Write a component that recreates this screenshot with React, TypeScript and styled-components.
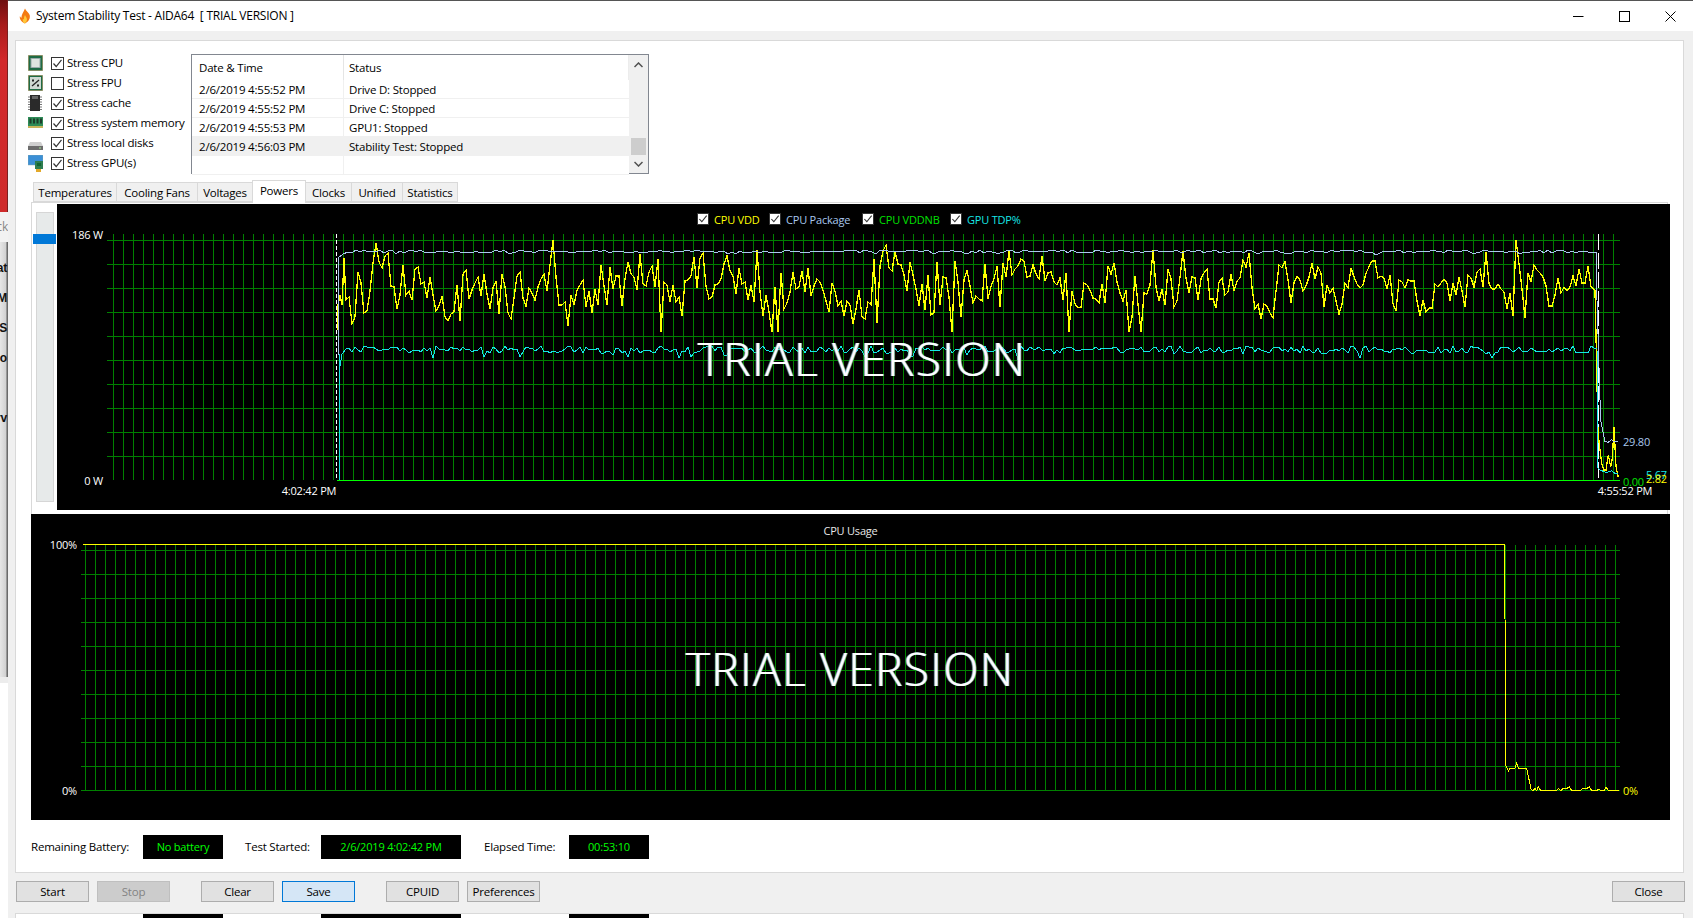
import React, { useMemo } from "react";
import styled, { createGlobalStyle } from "styled-components";

const UI = `"Open Sans", "Noto Sans", "Liberation Sans", sans-serif`;

const Global = createGlobalStyle`
  html, body { margin: 0; padding: 0; background: #fff; }
  #root { width: 1701px; height: 918px; overflow: hidden; }
  * { box-sizing: border-box; }
`;

const Page = styled.div`
  display: flex; width: 1701px; height: 918px; overflow: hidden; background: #fff;
  font: 11.5px/1 ${UI}; color: #000; letter-spacing: -0.2px;
`;
const LeftStrip = styled.div`display: flex; flex-direction: column; width: 8px; flex: none;`;
const RedBlock = styled.div`
  height: 212px;
  background: linear-gradient(to bottom, #6e0f10 0, #a81c1c 25px, #d2282a 60px, #cf2a2a 212px);
  border-right: 1px solid #7a2020;
`;
const FragBlock = styled.div`
  height: 465px; display: flex; flex-direction: column; overflow: hidden;
  background: linear-gradient(to right, #e6e6e6, #d2d2d2 70%, #6a6a6a 90%, #6a6a6a);
`;
const FragHead = styled.div`
  height: 30px; background: #f2f2f2; color: #888; text-align: right; line-height: 30px; overflow: hidden;
  direction: rtl; white-space: nowrap; font-size: 12px;
`;
const Frag = styled.div<{ $mt: number }>`
  margin-top: ${p => p.$mt}px; height: 14px; line-height: 14px; font: bold 12px/14px "Liberation Sans", sans-serif;
  direction: rtl; white-space: nowrap; overflow: hidden; color: #111; padding-right: 1px;
`;
const FragFoot = styled.div`height: 6px; background: #ececec;`;

const Window = styled.div`
  width: 1685px; flex: none; height: 918px; display: flex; flex-direction: column;
  background: #f0f0f0; border-top: 1px solid #555;
`;
const TitleBar = styled.div`
  height: 30px; flex: none; background: #fff; display: flex; align-items: center; padding-left: 10px;
  font-size: 12px;
`;
const TitleText = styled.span`margin-left: 4px; white-space: pre; letter-spacing: -0.24px;`;
const WinControls = styled.div`margin-left: auto; display: flex; align-items: center; height: 100%;`;
const WinBtn = styled.div`width: 46px; height: 30px; display: flex; align-items: center; justify-content: center;`;

const Panel = styled.div`
  margin: 9px 0 0 7px; width: 1669px; height: 833px; flex: none; background: #fff;
  border: 1px solid #d9d9d9; display: flex; flex-direction: column;
`;
const TopRow = styled.div`display: flex; padding: 12px 0 0 12px; height: 133px; flex: none;`;
const Checks = styled.div`width: 163px; flex: none; display: flex; flex-direction: column;`;
const CheckRow = styled.div`height: 20px; display: flex; align-items: center; white-space: nowrap;`;
const IconSlot = styled.div`width: 15px; height: 16px; flex: none; margin-right: 8px;`;
const Box = styled.span<{ $size: number }>`
  width: ${p => p.$size}px; height: ${p => p.$size}px; flex: none; background: #fff; border: 1px solid #333;
  display: inline-flex; align-items: center; justify-content: center;
`;
const CheckLabel = styled.span`margin-left: 3px;`;

const List = styled.div`
  margin-top: 1px; width: 458px; height: 120px; flex: none; border: 1px solid #828790; display: flex; background: #fff;
`;
const ListMain = styled.div`flex: 1; display: flex; flex-direction: column;`;
const Header = styled.div`
  height: 25px; flex: none; display: grid; grid-template-columns: 151px 1fr; align-items: stretch;
  border-right: 1px solid #ececec;
`;
const HeadCell = styled.div`
  display: flex; align-items: center; padding-left: 7px;
  & + & { border-left: 1px solid #e5e5e5; padding-left: 5px; }
`;
const Row = styled.div<{ $sel?: boolean }>`
  height: 19px; flex: none; display: grid; grid-template-columns: 151px 1fr; align-items: stretch;
  background: ${p => (p.$sel ? "#f0f0f0" : "#fff")};
  border-bottom: 1px solid #f0f0f0;
`;
const Cell = styled.div`
  display: flex; align-items: center; padding: 2px 0 0 7px;
  & + & { border-left: 1px solid #f0f0f0; padding-left: 5px; }
`;
const Scroll = styled.div`width: 19px; flex: none; background: #f0f0f0; display: flex; flex-direction: column;`;
const ScrollBtn = styled.div<{ $h: number }>`height: ${p => p.$h}px; flex: none; display: flex; align-items: center; justify-content: center;`;
const Track = styled.div`flex: 1; display: flex; flex-direction: column; justify-content: flex-end; align-items: center;`;
const Thumb = styled.div`width: 15px; height: 17px; background: #cdcdcd;`;

const Tabs = styled.div`
  display: flex; align-items: flex-end; height: 23px; flex: none; margin: 6px 0 0 18px; position: relative; z-index: 1;
`;
const Tab = styled.div<{ $w: number; $on?: boolean }>`
  width: ${p => p.$w}px; height: ${p => (p.$on ? 23 : 20)}px; margin-bottom: ${p => (p.$on ? 0 : 1)}px;
  display: flex; align-items: center; justify-content: center; white-space: nowrap;
  background: ${p => (p.$on ? "#fff" : "#f0f0f0")};
  border: 1px solid #d9d9d9; border-bottom: ${p => (p.$on ? "none" : "1px solid #d9d9d9")};
  margin-left: -1px;
  padding-bottom: ${p => (p.$on ? 3 : 0)}px;
  padding-top: ${p => (p.$on ? 0 : 2)}px;
`;
const TabBody = styled.div`
  margin: -1px 0 0 15px; width: 1637px; height: 312px; flex: none;
  border: 1px solid #d9d9d9; border-bottom: none; display: flex; padding-top: 1px;
`;
const SliderCol = styled.div`width: 25px; flex: none; padding: 8px 3px 8px 4px; position: relative;`;
const Trough = styled.div`width: 18px; height: 290px; background: #e7eaea; border: 1px solid #d6d6d6;`;
const SliderThumb = styled.div`position: absolute; left: 1px; top: 30px; width: 23px; height: 10px; background: #0078d7;`;
const ChartA = styled.div`position: relative; width: 1613px; height: 306px; flex: none; background: #000;`;
const ChartB = styled.div`position: relative; margin-left: 15px; width: 1639px; height: 306px; flex: none; background: #000;`;
const ChartSvg = styled.svg`display: block; width: 100%; height: 100%;`;
const ChartText = styled.text`font: 11px ${UI};`;
const Legend = styled.div`
  position: absolute; left: 640px; top: 9px; display: flex; align-items: center; height: 12px; font-size: 11px;
`;
const LegendItem = styled.div<{ $w: number; $c: string }>`
  width: ${p => p.$w}px; display: flex; align-items: center; gap: 5px; color: ${p => p.$c}; white-space: nowrap;
`;
const ChartTitle = styled.div`
  position: absolute; top: 11px; left: 0; right: 0; text-align: center; color: #e8e8e8; font-size: 11px;
`;
const Watermark = styled.div<{ $x: number; $y: number }>`
  position: absolute; left: ${p => p.$x}px; top: ${p => p.$y}px; transform: translate(-50%, -50%);
  color: #fff; font: 300 46px/1 ${UI}; letter-spacing: 1.4px; white-space: nowrap;
  text-shadow: 1px 0 0 rgba(70, 200, 255, .9), -1px 0 0 rgba(255, 190, 90, .7);
`;

const InfoRow = styled.div`display: flex; margin: 15px 0 0 15px; height: 24px; flex: none;`;
const Field = styled.div<{ $ml: number }>`display: flex; align-items: center; margin-left: ${p => p.$ml}px;`;
const FieldLabel = styled.div<{ $w: number }>`width: ${p => p.$w}px; white-space: nowrap;`;
const FieldValue = styled.div<{ $w: number }>`
  width: ${p => p.$w}px; height: 24px; background: #000; color: #00ff00; display: flex; align-items: center; justify-content: center;
  font-size: 11px; padding-bottom: 2px;
`;

const ButtonRow = styled.div`display: flex; height: 21px; margin: 8px 0 0 8px; width: 1669px; flex: none; gap: 8px;`;
const Btn = styled.div<{ $v?: "off" | "focus"; $gap?: number }>`
  width: 73px; height: 21px; display: flex; align-items: center; justify-content: center;
  margin-left: ${p => p.$gap ?? 0}px;
  background: ${p => (p.$v === "off" ? "#cccccc" : p.$v === "focus" ? "#d5e6f6" : "#e1e1e1")};
  border: 1px solid ${p => (p.$v === "off" ? "#bfbfbf" : p.$v === "focus" ? "#0078d7" : "#adadad")};
  color: ${p => (p.$v === "off" ? "#838383" : "#000")};
`;
const Spacer = styled.div`flex: 1;`;
const Remnant = styled.div`
  margin: 11px 0 0 7px; width: 1669px; flex: 1; background: #fff; border: 1px solid #d9d9d9; border-bottom: none;
  display: flex; padding-left: 127px;
`;
const RemnantBox = styled.div<{ $w: number; $ml: number }>`
  width: ${p => p.$w}px; margin-left: ${p => p.$ml}px; background: #000;
`;

function rng(seed: number) {
  return () => {
    seed |= 0; seed = (seed + 0x6d2b79f5) | 0;
    let t = Math.imul(seed ^ (seed >>> 15), 1 | seed);
    t = (t + Math.imul(t ^ (t >>> 7), 61 | t)) ^ t;
    return ((t ^ (t >>> 14)) >>> 0) / 4294967296;
  };
}
const pts = (a: number[][]) => a.map(p => p.join(",")).join(" ");

const Flame = () => (
  <svg width="14" height="16" viewBox="0 0 15 16">
    <path d="M7.5 0c1 3 4 4 5 7 .8 3-.6 7-5 9-4.400-2-6.200-5-5.400-8 .3 1 .9 1.700 1.600 2-.2-3 2-6 3.800-10z" fill="#f47a12" />
    <path d="M7.500 7c.6 2 2.300 3 2.100 5-.2 1.800-1.200 3-2.300 4-1.800-1-2.800-3-2-5 .4.400.8.700 1.200.800-.2-1.800.3-3.500 1-4.800z" fill="#ffc93a" />
  </svg>
);
const Check = ({ s }: { s: number }) => (
  <svg width={s} height={s} viewBox="0 0 11 11">
    <path d="M1.500 5.500 4.200 8.500 9.500 1.800" fill="none" stroke="#333" strokeWidth="1.200" />
  </svg>
);
const Chip = ({ inner }: { inner: React.ReactNode }) => (
  <svg width="15" height="16" viewBox="0 0 15 16">
    <rect x="0.500" y="0.500" width="14" height="15" fill="#1f6b45" stroke="#7d6a2a" strokeDasharray="1 1" />
    {inner}
  </svg>
);
const IconCpu = () => <Chip inner={<rect x="3" y="3.500" width="9" height="9" fill="#dfe5e0" stroke="#9aa" />} />;
const IconFpu = () => (
  <Chip inner={<g><rect x="2" y="2" width="11" height="12" fill="#cfd8d2" /><path d="M4 11 11 5" stroke="#222" strokeWidth="1.300" /><rect x="4" y="4.500" width="2" height="2" fill="#222" /><rect x="9" y="9.500" width="2" height="2" fill="#222" /></g>} />
);
const IconCache = () => (
  <svg width="15" height="16" viewBox="0 0 15 16">
    <path d="M0 2h14M0 4.500h14M0 7h14M0 9.500h14M0 12h14M0 14.500h14" stroke="#777" />
    <rect x="2" y="0" width="10" height="16" fill="#2a2a2a" />
    <rect x="4" y="1" width="6" height="3" fill="#666" />
  </svg>
);
const IconRam = () => (
  <svg width="15" height="16" viewBox="0 0 15 16">
    <rect x="0" y="2" width="15" height="9" fill="#2e8b57" />
    <path d="M1.500 3.500h2v5h-2zM5 3.500h2v5H5zM8.500 3.500h2v5h-2zM12 3.500h2v5h-2z" fill="#1d3d2a" />
    <path d="M0 11h15v2H0z" fill="#c8b45a" />
  </svg>
);
const IconDisk = () => (
  <svg width="15" height="16" viewBox="0 0 15 16">
    <path d="M2 7h11l2 4H0z" fill="#cfcfcf" />
    <rect x="0" y="11" width="15" height="4" fill="#6c6c6c" />
    <rect x="11" y="12.500" width="2" height="1" fill="#9fe08f" />
  </svg>
);
const IconGpu = () => (
  <svg width="15" height="18" viewBox="0 0 15 18">
    <rect x="0" y="0" width="15" height="10" fill="#3b8fd6" stroke="#8aa" strokeWidth=".500" />
    <rect x="7" y="6" width="8" height="8" fill="#2e7d4f" />
    <rect x="9" y="8" width="4" height="3" fill="#163" />
    <rect x="8" y="14" width="5" height="3" fill="#e3a92a" />
  </svg>
);

const GridLines = ({ x0, x1, ys, vx0, vn, vy0, vy1 }: { x0: number; x1: number; ys: number[]; vx0: number; vn: number; vy0: number; vy1: number }) => {
  const d = useMemo(() => {
    let s = "";
    ys.forEach(y => { s += `M${x0} ${y + 0.5}H${x1}`; });
    for (let i = 0; i <= vn; i++) s += `M${vx0 + i * 10 + 0.5} ${vy0}V${vy1}`;
    return s;
  }, []);
  return <path d={d} stroke="#008000" strokeWidth="1" fill="none" shapeRendering="crispEdges" />;
};

const Traces = () => {
  const t = useMemo(() => {
    const r = rng(64);
    const y: number[][] = [[338, 330], [338, 305], [340, 295], [342, 305], [344, 258], [346, 300]];
    let v = 0;
    for (let x = 349; x < 1592; x += 3) {
      const g = (r() + r() + r() - 1.5) * 30;
      v = 0.35 * v + g;
      let py = 284 + v;
      const k = r();
      if (k < 0.05) py += 22 + r() * 24;
      else if (k < 0.075) py -= 18 + r() * 16;
      y.push([x, Math.round(Math.max(240, Math.min(332, py)))]);
    }
    const b: number[][] = [[338, 355], [338, 258], [343, 254], [348, 252]];
    for (let x = 352; x < 1595; x += 4) b.push([x, Math.round(251.5 + (r() - 0.5) * 3 + (r() < 0.06 ? 2 : 0))]);
    const c: number[][] = [[339, 480], [339, 354], [340, 366], [342, 354], [346, 349]];
    for (let x = 349; x < 1595; x += 3) c.push([x, Math.round(349.5 + (r() - 0.5) * 7 + (r() < 0.07 ? 3 + r() * 5 : 0))]);
    const X = (n: number) => 1450 + n / 3;
    const Y = (n: number) => 400 + n / 3;
    const endB = [[450, 0], [452, 60], [460, 100], [465, 125], [475, 127], [485, 118], [490, 125], [505, 125]];
    const endC = [[444, 205], [450, 210], [470, 218], [485, 212], [495, 220], [505, 220]];
    const endY = [[444, 100], [455, 190], [462, 210], [468, 210], [475, 165], [482, 200], [487, 175], [492, 80], [498, 200], [505, 232]];
    b.push([1596, 252], [1597, 300]);
    endB.forEach(p => b.push([X(p[0]), Y(p[1])]));
    c.push([1597, 349], [1598, 468]);
    endC.forEach(p => c.push([X(p[0]), Y(p[1])]));
    y.push([1595, 290], [1596, 335]);
    endY.forEach(p => y.push([X(p[0]), Y(p[1])]));
    return { y, b, c };
  }, []);
  return (
    <g fill="none" strokeWidth="1" shapeRendering="crispEdges">
      <path d="M336.500 234V480" stroke="#fff" strokeDasharray="4 2" />
      <path d="M1598.500 234V480" stroke="#fff" strokeDasharray="16 3" />
      <polyline points={pts(t.y)} stroke="#ffff00" strokeWidth="1.300" />
      <polyline points={pts(t.b)} stroke="#a9c8ee" />
      <polyline points={pts(t.c)} stroke="#16e6e6" />
      <path d="M337 480.500H1620" stroke="#00ff00" />
    </g>
  );
};

const usage = [[168, 138], [176, 153], [180, 145], [195, 145], [200, 130], [205, 145], [230, 145], [243, 207], [248, 212], [255, 205], [260, 212], [265, 200], [272, 212], [320, 212], [325, 206], [332, 212], [340, 205], [350, 206], [358, 200], [365, 212], [392, 212], [398, 205], [410, 206], [418, 200], [425, 212], [440, 212], [445, 207], [452, 212], [462, 212], [468, 200], [475, 212], [508, 212]];

const checks: [string, boolean, React.ReactNode][] = [
  ["Stress CPU", true, <IconCpu />],
  ["Stress FPU", false, <IconFpu />],
  ["Stress cache", true, <IconCache />],
  ["Stress system memory", true, <IconRam />],
  ["Stress local disks", true, <IconDisk />],
  ["Stress GPU(s)", true, <IconGpu />],
];
const log = [
  ["2/6/2019 4:55:52 PM", "Drive D: Stopped"],
  ["2/6/2019 4:55:52 PM", "Drive C: Stopped"],
  ["2/6/2019 4:55:53 PM", "GPU1: Stopped"],
  ["2/6/2019 4:56:03 PM", "Stability Test: Stopped"],
];
const tabs: [string, number][] = [["Temperatures", 84], ["Cooling Fans", 82], ["Voltages", 56], ["Powers", 54], ["Clocks", 47], ["Unified", 52], ["Statistics", 56]];
const legend: [string, string, number][] = [["CPU VDD", "#ffff00", 72], ["CPU Package", "#a9c8ee", 93], ["CPU VDDNB", "#00e000", 88], ["GPU TDP%", "#16e6e6", 80]];

export default function App() {
  const ys1 = Array.from({ length: 10 }, (_, i) => 240 + i * 24);
  const ys2 = Array.from({ length: 11 }, (_, i) => 550 + i * 24);
  return (
    <Page>
      <Global />
      <LeftStrip>
        <RedBlock />
        <FragBlock>
          <FragHead>ck</FragHead>
          <Frag $mt={19}>at</Frag>
          <Frag $mt={16}>M</Frag>
          <Frag $mt={16}>S</Frag>
          <Frag $mt={16}>o</Frag>
          <Frag $mt={46}>rv</Frag>
        </FragBlock>
        <FragFoot />
      </LeftStrip>
      <Window>
        <TitleBar>
          <Flame />
          <TitleText>System Stability Test - AIDA64  [ TRIAL VERSION ]</TitleText>
          <WinControls>
            <WinBtn><svg width="11" height="11"><path d="M0 5.500h10.500" stroke="#000" /></svg></WinBtn>
            <WinBtn><svg width="11" height="11"><rect x=".5" y=".5" width="10" height="10" fill="none" stroke="#000" /></svg></WinBtn>
            <WinBtn><svg width="11" height="11"><path d="M.5.500l10 10M10.500.500l-10 10" stroke="#000" /></svg></WinBtn>
          </WinControls>
        </TitleBar>
        <Panel>
          <TopRow>
            <Checks>
              {checks.map(([label, on, icon]) => (
                <CheckRow key={label}>
                  <IconSlot>{icon}</IconSlot>
                  <Box $size={13}>{on && <Check s={11} />}</Box>
                  <CheckLabel>{label}</CheckLabel>
                </CheckRow>
              ))}
            </Checks>
            <List>
              <ListMain>
                <Header><HeadCell>Date &amp; Time</HeadCell><HeadCell>Status</HeadCell></Header>
                {log.map(([d, s], i) => (
                  <Row key={i} $sel={i === 3}><Cell>{d}</Cell><Cell>{s}</Cell></Row>
                ))}
                <Row><Cell /><Cell /></Row>
              </ListMain>
              <Scroll>
                <ScrollBtn $h={20}><svg width="9" height="6"><path d="M.5 5 4.500 1 8.500 5" fill="none" stroke="#505050" strokeWidth="1.500" /></svg></ScrollBtn>
                <Track><Thumb /></Track>
                <ScrollBtn $h={18}><svg width="9" height="6"><path d="M.5 1 4.500 5 8.500 1" fill="none" stroke="#505050" strokeWidth="1.500" /></svg></ScrollBtn>
              </Scroll>
            </List>
          </TopRow>
          <Tabs>
            {tabs.map(([t, w]) => <Tab key={t} $w={w} $on={t === "Powers"}>{t}</Tab>)}
          </Tabs>
          <TabBody>
            <SliderCol><Trough /><SliderThumb /></SliderCol>
            <ChartA>
              <ChartSvg viewBox="57 204 1613 306">
                <GridLines x0={107} x1={1620} ys={ys1} vx0={113} vn={150} vy0={234} vy1={480} />
                <Traces />
                <ChartText x={103} y={239} textAnchor="end" fill="#fff">186 W</ChartText>
                <ChartText x={103} y={485} textAnchor="end" fill="#fff">0 W</ChartText>
                <ChartText x={309} y={495} textAnchor="middle" fill="#fff">4:02:42 PM</ChartText>
                <ChartText x={1625} y={495} textAnchor="middle" fill="#fff">4:55:52 PM</ChartText>
                <ChartText x={1623} y={446} fill="#a9c8ee">29.80</ChartText>
                <ChartText x={1623} y={486} fill="#00e000">0.00</ChartText>
                <ChartText x={1646} y={479} fill="#16e6e6">5.67</ChartText>
                <ChartText x={1646} y={483} fill="#ffff00">2.82</ChartText>
              </ChartSvg>
              <Legend>
                {legend.map(([t, c, w]) => (
                  <LegendItem key={t} $w={w} $c={c}><Box $size={12}><Check s={10} /></Box>{t}</LegendItem>
                ))}
              </Legend>
              <Watermark $x={805} $y={154}>TRIAL VERSION</Watermark>
            </ChartA>
          </TabBody>
          <ChartB>
            <ChartSvg viewBox="31 514 1639 306">
              <GridLines x0={81} x1={1620} ys={ys2} vx0={85} vn={153} vy0={545} vy1={790} />
              <polyline
                fill="none" stroke="#ffff00" shapeRendering="crispEdges"
                points={pts([[83, 544.5], [1504.5, 544.5], ...usage.map(p => [1450 + p[0] / 3, 720 + p[1] / 3])])}
              />
              <ChartText x={77} y={549} textAnchor="end" fill="#fff">100%</ChartText>
              <ChartText x={77} y={795} textAnchor="end" fill="#fff">0%</ChartText>
              <ChartText x={1623} y={795} fill="#ffff00">0%</ChartText>
            </ChartSvg>
            <ChartTitle>CPU Usage</ChartTitle>
            <Watermark $x={819} $y={154}>TRIAL VERSION</Watermark>
          </ChartB>
          <InfoRow>
            <Field $ml={0}><FieldLabel $w={112}>Remaining Battery:</FieldLabel><FieldValue $w={80}>No battery</FieldValue></Field>
            <Field $ml={22}><FieldLabel $w={76}>Test Started:</FieldLabel><FieldValue $w={140}>2/6/2019 4:02:42 PM</FieldValue></Field>
            <Field $ml={23}><FieldLabel $w={85}>Elapsed Time:</FieldLabel><FieldValue $w={80}>00:53:10</FieldValue></Field>
          </InfoRow>
        </Panel>
        <ButtonRow>
          <Btn>Start</Btn>
          <Btn $v="off">Stop</Btn>
          <Btn $gap={23}>Clear</Btn>
          <Btn $v="focus">Save</Btn>
          <Btn $gap={23}>CPUID</Btn>
          <Btn>Preferences</Btn>
          <Spacer />
          <Btn>Close</Btn>
        </ButtonRow>
        <Remnant>
          <RemnantBox $w={80} $ml={0} />
          <RemnantBox $w={140} $ml={98} />
          <RemnantBox $w={80} $ml={108} />
        </Remnant>
      </Window>
    </Page>
  );
}
